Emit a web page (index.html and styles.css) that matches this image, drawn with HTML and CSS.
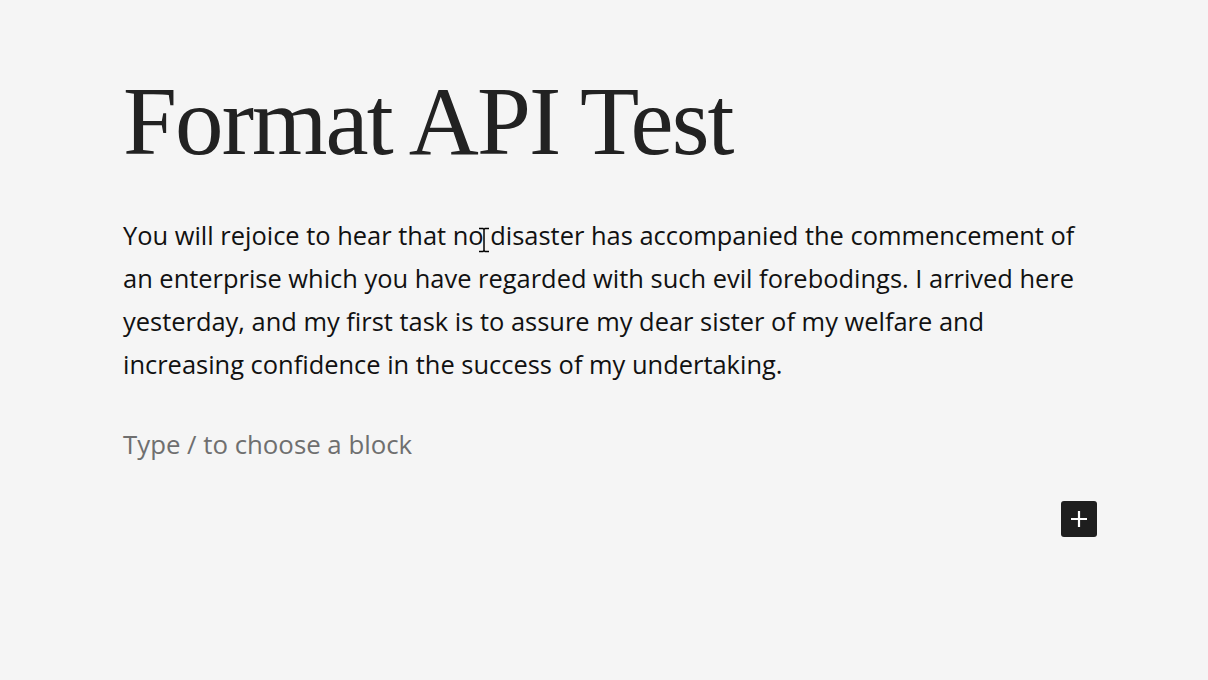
FILE: index.html
```html
<!DOCTYPE html>
<html>
<head>
<meta charset="utf-8">
<link rel="stylesheet" href="styles.css">
</head>
<body>
<main class="editor">
  <h1 class="title">Format API Test</h1>
  <p class="para">You will rejoice to hear that no disaster has accompanied the commencement of an enterprise which you have regarded with such evil forebodings. I arrived here yesterday, and my first task is to assure my dear sister of my welfare and increasing confidence in the success of my undertaking.</p>
  <div class="appender">
    <p class="placeholder">Type / to choose a block</p>
    <button class="add-btn" aria-label="Add block">
      <svg width="24" height="24" viewBox="0 0 24 24"><path d="M12 4v16M4 12h16" stroke="#fff" stroke-width="2.2" fill="none"/></svg>
    </button>
  </div>
</main>
<svg class="ibeam" width="14" height="26" viewBox="0 0 14 26"><path d="M2 1.5h4l1 1 1-1h4M7 2.5v21M2 24.5h4l1-1 1 1h4" stroke="#000" stroke-width="1.5" fill="none"/></svg>
</body>
</html>
```
FILE: styles.css
```css
html, body {
  margin: 0;
  padding: 0;
  background: #f5f5f5;
}
body {
  width: 1208px;
  height: 680px;
  overflow: hidden;
  position: relative;
}
.editor {
  padding: 62px 0 0 123px;
  width: 975px;
  box-sizing: content-box;
}
.title {
  margin: 0;
  font-family: "Liberation Serif", serif;
  font-weight: 400;
  font-size: 97px;
  line-height: 120px;
  color: #222;
  letter-spacing: -1.9px;
}
.para {
  margin: 32px 0 0;
  font-family: "Open Sans", sans-serif;
  font-size: 25.45px;
  line-height: 43px;
  color: #111;
}
.appender {
  position: relative;
  margin-top: 37px;
}
.placeholder {
  margin: 0;
  font-family: "Open Sans", sans-serif;
  font-size: 25.8px;
  line-height: 43px;
  color: #6f6f6f;
}
.add-btn {
  position: absolute;
  right: 1px;
  top: 78px;
  width: 36px;
  height: 36px;
  padding: 0;
  border: 0;
  border-radius: 3px;
  background: #1e1e1e;
  display: flex;
  align-items: center;
  justify-content: center;
}
.ibeam {
  position: absolute;
  left: 477px;
  top: 227px;
}
```
